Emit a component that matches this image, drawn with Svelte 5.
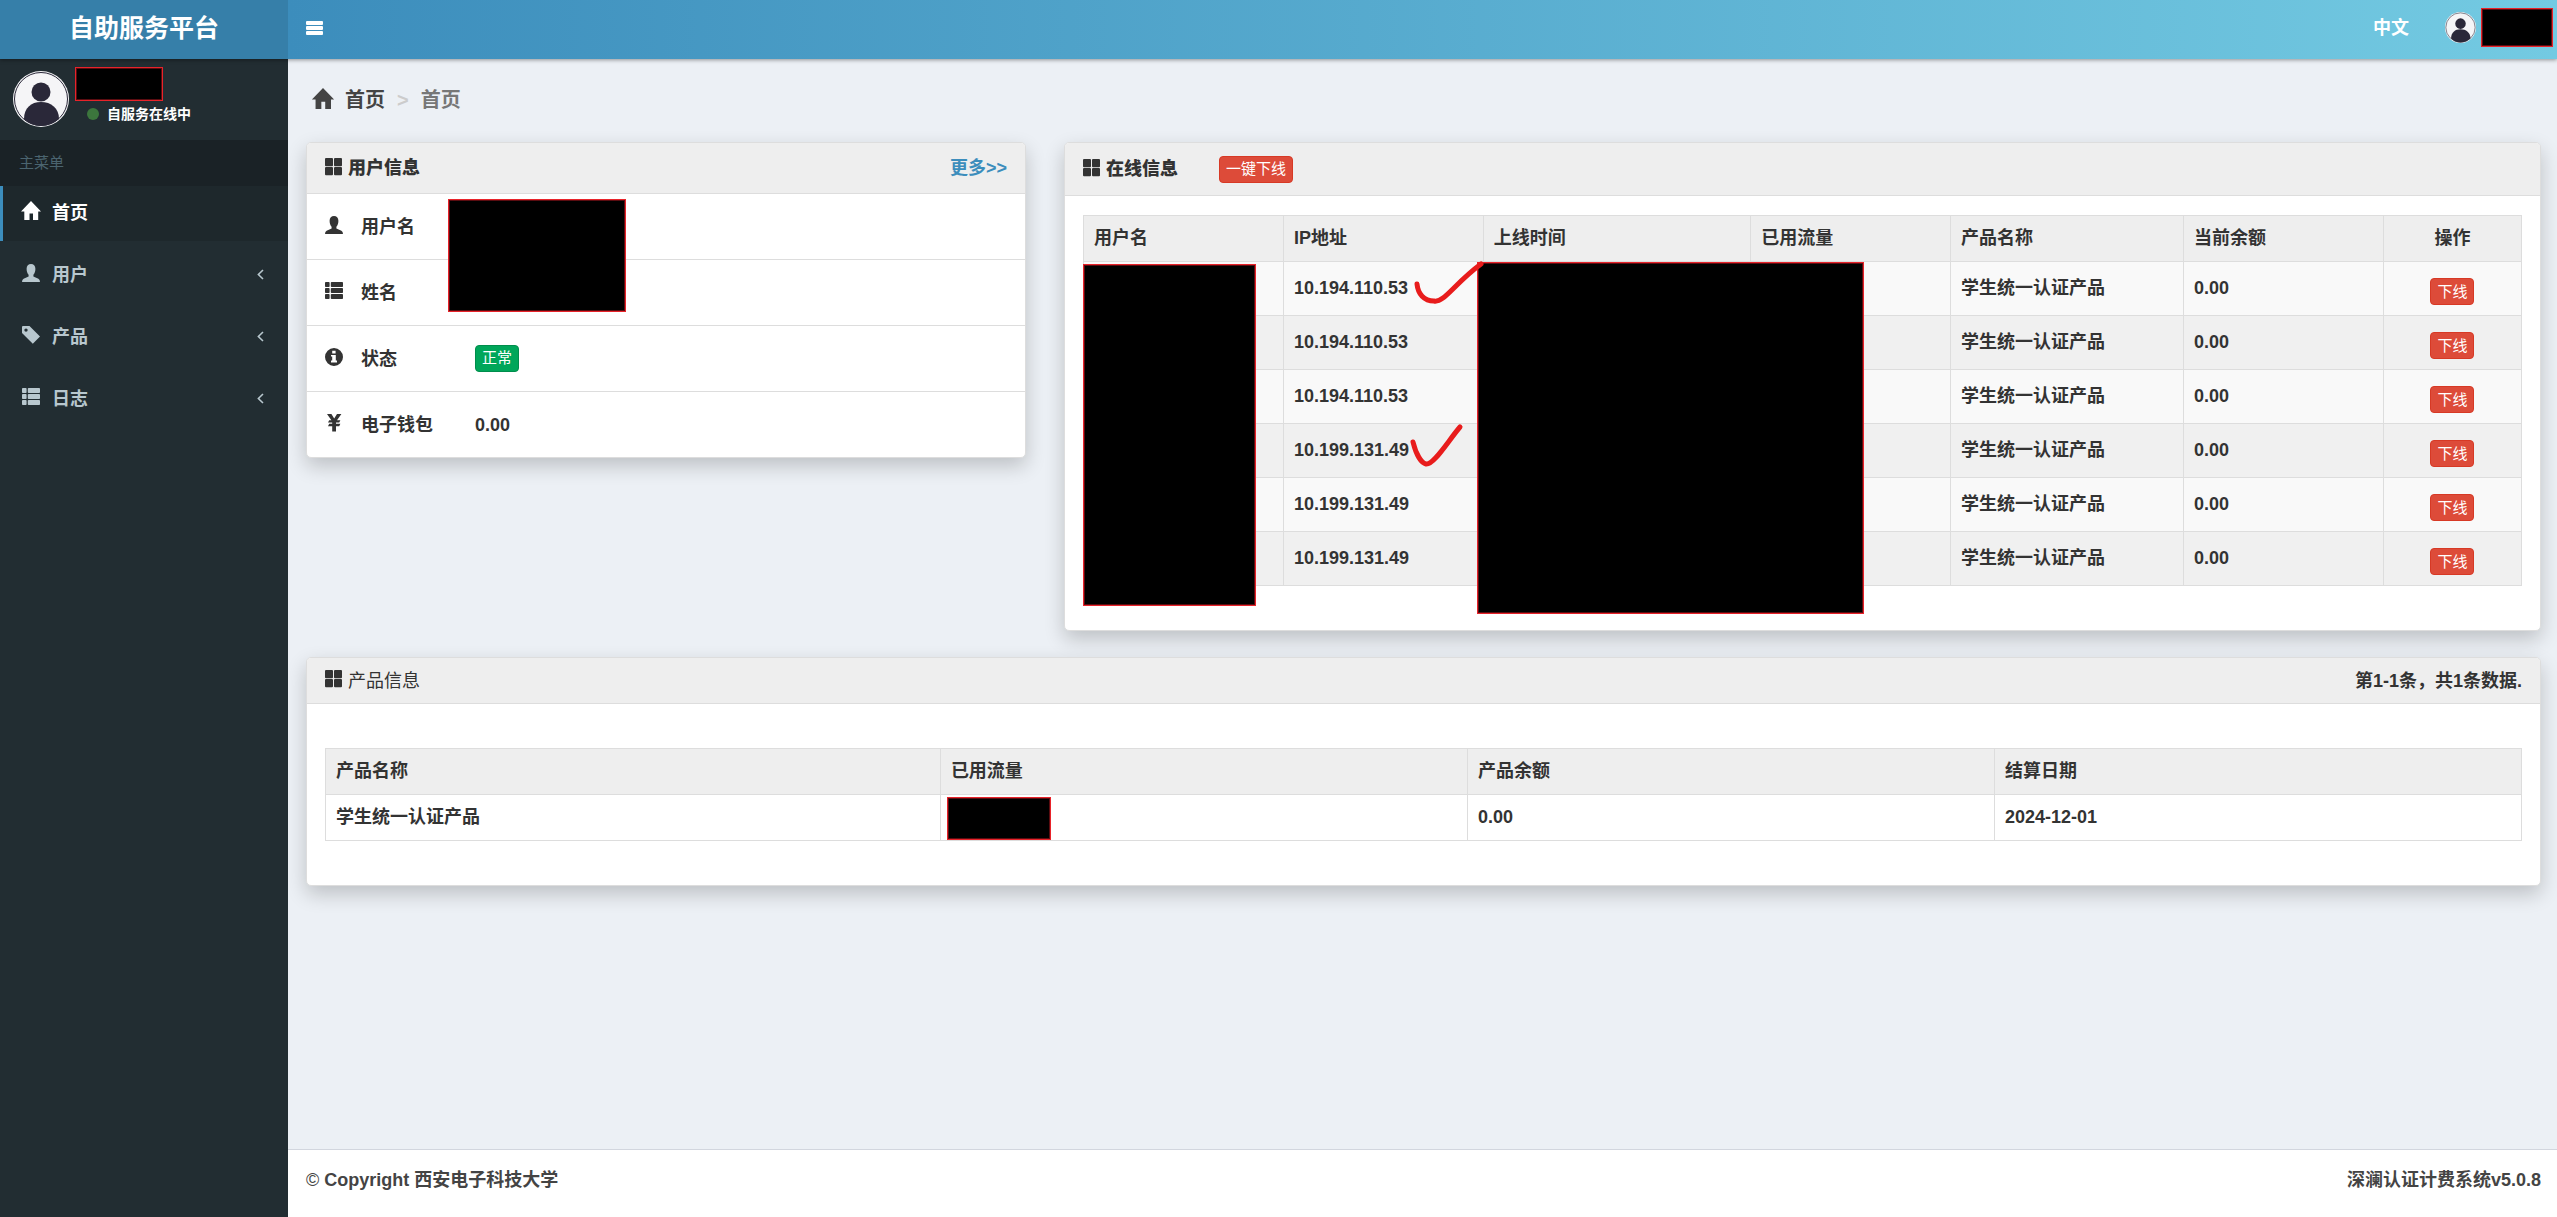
<script>
  let collapsed = $state(false);

  const menu = [
    { icon: "home", label: "首页", active: true },
    { icon: "user", label: "用户", children: true },
    { icon: "tag", label: "产品", children: true },
    { icon: "list", label: "日志", children: true },
  ];

  const profile = [
    { icon: "user", label: "用户名" },
    { icon: "list", label: "姓名" },
    { icon: "info", label: "状态", badge: "正常" },
    { icon: "yen", label: "电子钱包", value: "0.00" },
  ];

  const sessions = [
    { ip: "10.194.110.53", mark: "wide" },
    { ip: "10.194.110.53" },
    { ip: "10.194.110.53" },
    { ip: "10.199.131.49", mark: "narrow" },
    { ip: "10.199.131.49" },
    { ip: "10.199.131.49" },
  ];
</script>

{#snippet icon(name)}
  <svg class="icon" viewBox="0 0 18 18" fill="currentColor" aria-hidden="true">
    {#if name === "home"}
      <path d="M9 -1 L19 9.5 H16.2 V18 H11 V11.5 H7.5 V18 H2.3 V9.5 H-1 Z" />
    {:else if name === "user"}
      <path
        d="M9 0 C11.6 0 13.4 1.6 13.4 4.8 C13.4 7.6 12.6 9.6 11.4 10.8 V12.4 L16.4 14.8 Q18 15.6 18 18 H0 Q0 15.6 1.6 14.8 L6.6 12.4 V10.8 C5.4 9.6 4.6 7.6 4.6 4.8 C4.6 1.6 6.4 0 9 0 Z"
      />
    {:else if name === "tag"}
      <path
        fill-rule="evenodd"
        d="M1 0 H7.5 L18 10.4 L10.8 17.8 L0 7 V1 Q0 0 1 0 Z M4 2.4 A1.7 1.7 0 1 0 4 5.8 A1.7 1.7 0 1 0 4 2.4 Z"
      />
    {:else if name === "list"}
      <rect x="0" y="0" width="4.6" height="5" rx="0.8" />
      <rect x="0" y="6" width="4.6" height="5" rx="0.8" />
      <rect x="0" y="12" width="4.6" height="5" rx="0.8" />
      <rect x="5.8" y="0" width="12.2" height="5" rx="0.8" />
      <rect x="5.8" y="6" width="12.2" height="5" rx="0.8" />
      <rect x="5.8" y="12" width="12.2" height="5" rx="0.8" />
    {:else if name === "info"}
      <path
        fill-rule="evenodd"
        d="M9 0 A9 9 0 1 1 9 18 A9 9 0 1 1 9 0 Z M7.2 2.8 V5.4 H10.6 V2.8 Z M6 7 V8.6 H7.2 V12.6 H6 V14.4 H12 V12.6 H10.8 V7 Z"
      />
    {:else if name === "yen"}
      <path
        d="M2 0 H6.4 L9.2 4.6 L12 0 H16.4 L12 6.2 H15.4 L14.2 8.6 H11 V9.8 H15.4 L14.2 12.2 H11 V17.4 H7.2 V12.2 H3 L4.2 9.8 H7.2 V8.6 H3 L4.2 6.2 H6.4 Z"
      />
    {:else if name === "grid"}
      <rect x="0" y="0" width="8" height="8.2" rx="1" />
      <rect x="9" y="0" width="8" height="8.2" rx="1" />
      <rect x="0" y="9" width="8" height="8.2" rx="1" />
      <rect x="9" y="9" width="8" height="8.2" rx="1" />
    {/if}
  </svg>
{/snippet}

{#snippet avatar()}
  <svg class="avatar" viewBox="0 0 56 56" aria-hidden="true">
    <circle cx="28" cy="28" r="28" fill="#f5f5f7" />
    <circle cx="28" cy="28" r="26.5" fill="none" stroke="#2a2839" />
    <circle cx="28" cy="21" r="9.5" fill="#2a2839" />
    <path d="M11 48 C11 37 18 31 28 31 C38 31 46 37 46 48 Q38 55 28 55 Q18 55 11 48 Z" fill="#2a2839" />
  </svg>
{/snippet}

<div class="wrapper">
  <header class="main-header">
    <a class="logo" href="#home">自助服务平台</a>
    <nav class="navbar">
      <button class="toggle" aria-label="切换菜单" onclick={() => (collapsed = !collapsed)}>
        <svg width="17" height="14" viewBox="0 0 17 14" fill="#fff">
          <rect width="17" height="4" rx="1" />
          <rect y="5" width="17" height="4" rx="1" />
          <rect y="10" width="17" height="4" rx="1" />
        </svg>
      </button>
      <div class="navbar-right">
        <a class="lang" href="#lang">中文</a>
        <a class="account" href="#account" aria-label="账户">
          {@render avatar()}
          <span class="mask"></span>
        </a>
      </div>
    </nav>
  </header>

  <div class="body">
    {#if !collapsed}
      <aside class="sidebar">
        <div class="user-panel">
          {@render avatar()}
          <div class="user-meta">
            <span class="mask"></span>
            <span class="online"><i></i>自服务在线中</span>
          </div>
        </div>
        <div class="menu-header">主菜单</div>
        <ul class="menu">
          {#each menu as item}
            <li>
              <a href="#{item.icon}" class:active={item.active}>
                {@render icon(item.icon)}
                <span>{item.label}</span>
                {#if item.children}
                  <svg class="angle" width="7" height="11" viewBox="0 0 7 11">
                    <path d="M6 1 L1.4 5.5 L6 10" fill="none" stroke="currentColor" stroke-width="1.6" />
                  </svg>
                {/if}
              </a>
            </li>
          {/each}
        </ul>
      </aside>
    {/if}

    <div class="main">
      <main class="content">
        <nav class="breadcrumb">
          {@render icon("home")}
          <a href="#home">首页</a>
          <span class="sep">&gt;</span>
          <span class="current">首页</span>
        </nav>

        <div class="row">
          <section class="panel profile">
            <div class="panel-heading">
              {@render icon("grid")}
              <strong>用户信息</strong>
              <a class="more" href="#more">更多&gt;&gt;</a>
            </div>
            <ul class="profile-list">
              {#each profile as item}
                <li>
                  {@render icon(item.icon)}
                  <span class="label">{item.label}</span>
                  {#if item.badge}
                    <span class="badge success">{item.badge}</span>
                  {:else if item.value}
                    <span>{item.value}</span>
                  {/if}
                </li>
              {/each}
            </ul>
            <span class="mask profile-mask"></span>
          </section>

          <section class="panel online-panel">
            <div class="panel-heading tall">
              {@render icon("grid")}
              <strong>在线信息</strong>
              <button class="badge danger drop-all">一键下线</button>
            </div>
            <div class="panel-body">
              <div class="table-wrap">
                <table class="sessions">
                  <colgroup>
                    <col class="c14" /><col class="c14" /><col class="c19" /><col class="c14" />
                    <col class="c16" /><col class="c14" /><col />
                  </colgroup>
                  <thead>
                    <tr>
                      <th>用户名</th>
                      <th>IP地址</th>
                      <th>上线时间</th>
                      <th>已用流量</th>
                      <th>产品名称</th>
                      <th>当前余额</th>
                      <th class="center">操作</th>
                    </tr>
                  </thead>
                  <tbody>
                    {#each sessions as s}
                      <tr>
                        <td></td>
                        <td class="ip">
                          {s.ip}
                          {#if s.mark === "wide"}
                            <svg class="mark" width="72" height="44" viewBox="0 0 72 44">
                              <path d="M3 22 C4 32 10 39 20 39 C30 41 40 22 67 2" />
                            </svg>
                          {:else if s.mark === "narrow"}
                            <svg class="mark" width="72" height="44" viewBox="0 0 72 44">
                              <path d="M-1 18 C2 30 7 39 12 40 C20 41 34 17 46 3" />
                            </svg>
                          {/if}
                        </td>
                        <td></td>
                        <td></td>
                        <td>学生统一认证产品</td>
                        <td>0.00</td>
                        <td class="center action"><button class="badge danger">下线</button></td>
                      </tr>
                    {/each}
                  </tbody>
                </table>
                <span class="mask name-mask"></span>
                <span class="mask time-mask"></span>
              </div>
            </div>
          </section>
        </div>

        <section class="panel products-panel">
          <div class="panel-heading short">
            {@render icon("grid")}
            <span>产品信息</span>
            <strong class="summary">第1-1条，共1条数据.</strong>
          </div>
          <div class="panel-body roomy">
            <table class="products">
              <colgroup><col class="c28" /><col class="c24" /><col class="c24" /><col /></colgroup>
              <thead>
                <tr>
                  <th>产品名称</th>
                  <th>已用流量</th>
                  <th>产品余额</th>
                  <th>结算日期</th>
                </tr>
              </thead>
              <tbody>
                <tr>
                  <td>学生统一认证产品</td>
                  <td class="usage"><span class="mask"></span></td>
                  <td>0.00</td>
                  <td>2024-12-01</td>
                </tr>
              </tbody>
            </table>
          </div>
        </section>
      </main>

      <footer class="footer">
        <span><span class="copy">©</span> Copyright 西安电子科技大学</span>
        <span>深澜认证计费系统v5.0.8</span>
      </footer>
    </div>
  </div>
</div>

<style>
  :global(body) {
    margin: 0;
    background: #ecf0f5;
  }

  .wrapper {
    display: flex;
    flex-direction: column;
    min-height: 100vh;
    color: #333;
    font-family: "Liberation Sans", "Noto Sans CJK SC", sans-serif;
    font-size: 18px;
    font-weight: 700;
    line-height: 26px;
  }

  .wrapper * {
    box-sizing: border-box;
  }

  a {
    color: inherit;
    text-decoration: none;
  }

  button {
    border: 0;
    cursor: pointer;
    font-family: inherit;
  }

  ul {
    margin: 0;
    padding: 0;
    list-style: none;
  }

  .icon {
    width: 18px;
    height: 18px;
    flex: none;
    margin-bottom: 3px;
    overflow: visible;
  }

  .mask {
    display: block;
    background: #000;
    border: 1px solid #e8232a;
    box-shadow: inset 0 0 0 1px #5a0c10;
  }

  /* header */
  .main-header {
    display: flex;
    height: 59px;
    position: relative;
    z-index: 5;
    box-shadow: 0 1px 4px rgba(0, 0, 0, 0.4);
  }

  .logo {
    width: 288px;
    padding-bottom: 4px;
    display: flex;
    align-items: center;
    justify-content: center;
    background: #367fa9;
    color: #fff;
    font-size: 25px;
  }

  .navbar {
    flex: 1;
    display: flex;
    align-items: center;
    justify-content: space-between;
    padding: 0 4px 4px 18px;
    background: linear-gradient(to right, #3c8dbc, #73cae2);
  }

  .toggle {
    padding: 0;
    display: flex;
    background: none;
  }

  .navbar-right,
  .account {
    display: flex;
    align-items: center;
  }

  .lang {
    margin-right: 36px;
    color: #fff;
  }

  .account {
    gap: 5px;
  }

  .account .avatar {
    width: 31px;
    height: 31px;
  }

  .account .mask {
    width: 72px;
    height: 39px;
  }

  .body {
    flex: 1;
    display: flex;
  }

  /* sidebar */
  .sidebar {
    width: 288px;
    flex: none;
    background: #222d32;
    color: #b8c7ce;
  }

  .user-panel {
    display: flex;
    gap: 6px;
    height: 81px;
    padding: 8px 13px;
  }

  .user-panel .avatar {
    width: 56px;
    height: 56px;
    margin-top: 4px;
  }

  .user-meta .mask {
    width: 88px;
    height: 34px;
  }

  .online {
    display: flex;
    align-items: center;
    gap: 8px;
    padding-left: 12px;
    color: #fff;
    font-size: 14px;
  }

  .online i {
    width: 12px;
    height: 12px;
    border-radius: 50%;
    background: #3c763d;
  }

  .menu-header {
    padding: 10px 19px;
    background: #1a2226;
    color: #4b646f;
    font-size: 15px;
    font-weight: 400;
  }

  .menu {
    display: flex;
    flex-direction: column;
    gap: 7px;
  }

  .menu a {
    display: flex;
    align-items: center;
    gap: 12px;
    height: 55px;
    padding: 0 24px 2px 19px;
    border-left: 3px solid transparent;
  }

  .menu a.active {
    background: #1e282c;
    border-left-color: #3c8dbc;
    color: #fff;
  }

  .angle {
    margin-left: auto;
  }

  /* content */
  .main {
    flex: 1;
    min-width: 0;
    display: flex;
    flex-direction: column;
  }

  .content {
    flex: 1;
    padding: 28px 16px 28px 18px;
  }

  .breadcrumb {
    display: flex;
    align-items: center;
    gap: 12px;
    margin-bottom: 29px;
    padding-left: 7px;
    color: #444;
    font-size: 20px;
  }

  .breadcrumb .icon {
    width: 20px;
    height: 20px;
  }

  .sep {
    color: #ccc;
  }

  .current {
    color: #777;
  }

  .row {
    display: grid;
    grid-template-columns: 720fr 1477fr;
    align-items: start;
    gap: 38px;
    margin-bottom: 26px;
  }

  .panel {
    position: relative;
    background: #fff;
    border: 1px solid #ddd;
    border-radius: 5px;
    box-shadow: 0 8px 20px rgba(0, 0, 0, 0.2);
  }

  .panel-heading {
    display: flex;
    align-items: center;
    gap: 5px;
    height: 51px;
    padding: 0 18px;
    background: #eee;
    border-bottom: 1px solid #ddd;
    border-radius: 4px 4px 0 0;
  }

  .panel-heading.tall {
    height: 53px;
  }

  .panel-heading.short {
    height: 46px;
    font-weight: 400;
  }

  .more {
    margin-left: auto;
    color: #3c8dbc;
  }

  .summary {
    margin-left: auto;
  }

  .profile-list li {
    display: flex;
    align-items: center;
    gap: 18px;
    height: 66px;
    padding: 0 18px;
    border-bottom: 1px solid #ddd;
  }

  .profile-list li:last-child {
    height: 65px;
    border-bottom: 0;
  }

  .label {
    width: 96px;
  }

  .profile-mask {
    position: absolute;
    top: 56px;
    left: 141px;
    width: 178px;
    height: 113px;
  }

  .badge {
    display: inline-block;
    height: 27px;
    padding: 0 6px;
    border: 1px solid;
    border-radius: 4px;
    color: #fff;
    font-size: 15px;
    font-weight: 400;
    line-height: 24px;
  }

  .success {
    background: #00a65a;
    border-color: #008d4c;
  }

  .danger {
    background: #dd4b39;
    border-color: #d73925;
  }

  .drop-all {
    margin-left: 36px;
  }

  /* tables */
  .panel-body {
    padding: 19px 18px 44px;
  }

  .panel-body.roomy {
    padding: 44px 18px;
  }

  .table-wrap {
    position: relative;
  }

  table {
    width: 100%;
    border-collapse: collapse;
    table-layout: fixed;
  }

  th,
  td {
    height: 46px;
    padding: 0 10px 2px;
    border: 1px solid #ddd;
    text-align: left;
  }

  thead {
    background: #eee;
  }

  .sessions td {
    height: 54px;
  }

  .sessions tbody tr {
    background: #f0f0f0;
  }

  .sessions tbody tr:nth-child(odd) {
    background: #f9f9f9;
  }

  .sessions .center {
    text-align: center;
  }

  .sessions .action {
    padding-top: 6px;
    padding-bottom: 0;
  }

  .action .badge {
    display: block;
    margin: 0 auto;
  }

  .c14 {
    width: 13.9%;
  }

  .c16 {
    width: 16.2%;
  }

  .c19 {
    width: 18.6%;
  }

  .c24 {
    width: 24%;
  }

  .c28 {
    width: 28%;
  }

  .ip {
    position: relative;
  }

  .mark {
    position: absolute;
    top: 0;
    left: 130px;
    z-index: 2;
    overflow: visible;
    fill: none;
    stroke: #e81c1c;
    stroke-width: 5;
    stroke-linecap: round;
    stroke-linejoin: round;
  }

  .name-mask {
    position: absolute;
    top: 49px;
    left: 0;
    width: 12%;
    height: 342px;
  }

  .time-mask {
    position: absolute;
    top: 47px;
    left: 27.4%;
    width: 26.9%;
    height: 352px;
  }

  .sessions + .mask {
    z-index: 1;
  }

  .products .usage {
    padding: 1px 6px 0;
  }

  .usage .mask {
    width: 104px;
    height: 43px;
  }

  .footer {
    display: flex;
    align-items: center;
    justify-content: space-between;
    height: 68px;
    padding: 0 16px 8px 18px;
    background: #fff;
    border-top: 1px solid #d2d6de;
    color: #444;
  }

  .copy {
    font-weight: 400;
  }
</style>
